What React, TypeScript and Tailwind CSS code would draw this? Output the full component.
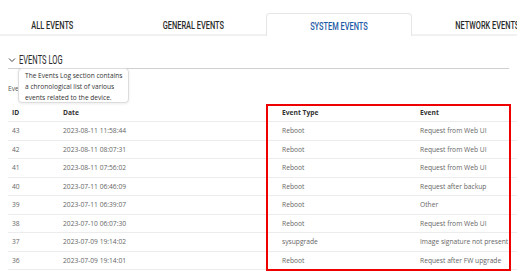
import React from "react";

const rows = [
  ["43", "2023-08-11 11:58:44", "Reboot", "Request from Web UI"],
  ["42", "2023-08-11 08:07:31", "Reboot", "Request from Web UI"],
  ["41", "2023-08-11 07:56:02", "Reboot", "Request from Web UI"],
  ["40", "2023-07-11 06:46:09", "Reboot", "Request after backup"],
  ["39", "2023-07-11 06:39:07", "Reboot", "Other"],
  ["38", "2023-07-10 06:07:30", "Reboot", "Request from Web UI"],
  ["37", "2023-07-09 19:14:02", "sysupgrade", "Image signature not present"],
  ["36", "2023-07-09 19:14:01", "Reboot", "Request after FW upgrade"],
];

const cond = { fontFamily: 'Roboto, "Liberation Sans", Arial, sans-serif' };

function Cond({ children, className = "" }: { children: React.ReactNode; className?: string }) {
  return <span className={"inline-block whitespace-nowrap font-medium " + className} style={cond}>{children}</span>;
}

export default function App() {
  return (
    <div className="w-[517px] h-[275px] bg-white overflow-hidden relative" style={{ fontFamily: '"Open Sans", sans-serif' }}>
      {/* Tabs */}
      <div className="pt-[13px] flex border-b-2 border-[#f1f1f1] h-[36px] text-[10px] text-[#2a2a2a]">
        <div className="w-[120px] shrink-0 pr-[16px] pt-[3px] flex items-center justify-center"><Cond className="scale-x-[0.74]">ALL EVENTS</Cond></div>
        <div className="w-[146px] shrink-0 pt-[3px] flex items-center justify-center"><Cond className="scale-x-[0.74]">GENERAL EVENTS</Cond></div>
        <div className="w-[146px] shrink-0 pt-[3px] -mb-[2px] flex items-center justify-center border border-b-0 border-[#e6e6e6] rounded-t-[4px] bg-white text-[#1c5aa6]"><Cond className="scale-x-[0.74]">SYSTEM EVENTS</Cond></div>
        <div className="w-[150px] shrink-0 pt-[3px] flex items-center justify-center"><Cond className="scale-x-[0.74]">NETWORK EVENTS</Cond></div>
      </div>

      {/* Section header */}
      <div className="mx-[8px] mt-[14px] h-[19px] flex items-center border-b border-[#cfcfcf]">
        <svg width="8" height="6" viewBox="0 0 8 6" className="mr-[-8px] mt-[2px] shrink-0">
          <path d="M1 1.5 L4 4.5 L7 1.5" fill="none" stroke="#444" strokeWidth="1" />
        </svg>
        <Cond className="text-[13px] text-[#2a2a2a] leading-none scale-x-[0.58] origin-left ml-[11px] font-normal">EVENTS LOG</Cond>
      </div>

      <div className="px-[8px] mt-[15px] text-[6.7px] text-[#555] h-[14px]">Events Log</div>

      {/* Tooltip */}
      <div className="absolute left-[18px] top-[68px] w-[111px] h-[35px] bg-white border border-[#dcdcdc] rounded-[4px] shadow-[0_1px_3px_rgba(0,0,0,0.08)] pl-[6px] pr-[1px] py-[1px] text-[6.6px] leading-[11px] text-[#333]">
        The Events Log section contains a chronological list of various events related to the device.
      </div>

      {/* Table */}
      <div className="absolute left-[8px] right-0 top-[104px]">
        <div className="flex h-[18px] pt-[1px] items-center border-b border-[#ececec] text-[6.7px] font-bold text-[#333]">
          <div className="w-[55px] pl-[4px]">ID</div>
          <div className="w-[219px]">Date</div>
          <div className="w-[138px]">Event Type</div>
          <div className="flex-1">Event</div>
        </div>
        {rows.map((r) => (
          <div key={r[0]} className="flex h-[18.5px] pt-[1px] items-center border-b border-[#ececec] text-[6.7px] text-[#666]">
            <div className="w-[55px] pl-[4px]">{r[0]}</div>
            <div className="w-[219px]">{r[1]}</div>
            <div className="w-[138px]">{r[2]}</div>
            <div className="flex-1 whitespace-nowrap">{r[3]}</div>
          </div>
        ))}
      </div>

      {/* Red highlight */}
      <div className="absolute left-[266px] top-[104px] w-[245px] h-[167px] border-2 border-[#ee0000] pointer-events-none" />
    </div>
  );
}
